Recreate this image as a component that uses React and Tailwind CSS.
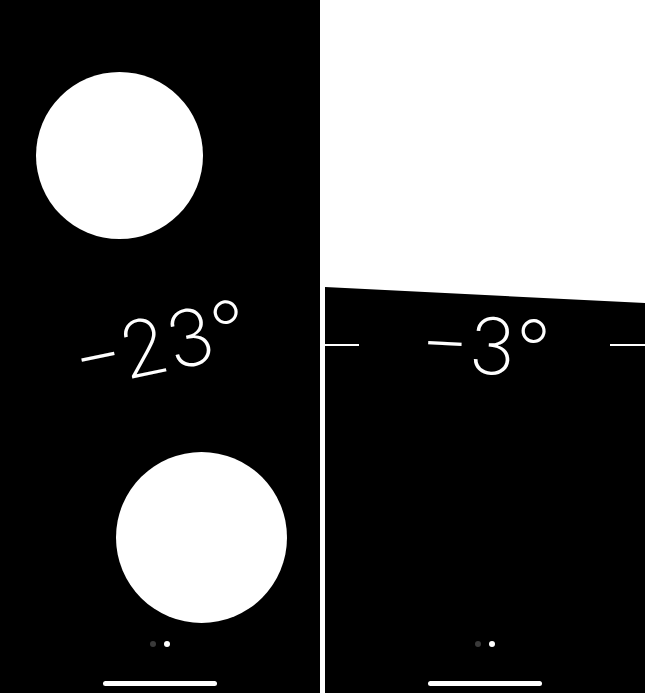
import React from 'react'

const PageDots = () => (
  <div className="flex items-center justify-center gap-[8px]">
    <span className="h-[6px] w-[6px] rounded-full bg-[#3a3a3a]" />
    <span className="h-[6px] w-[6px] rounded-full bg-white" />
  </div>
)

const BottomBar = () => (
  <div className="absolute bottom-0 left-0 right-0 flex flex-col items-center">
    <PageDots />
    <div className="mt-[34px] mb-[7px] h-[5px] w-[114px] rounded-full bg-white" />
  </div>
)

const Reading = ({ value, className }) => (
  <div className={`absolute left-0 right-0 flex h-[100px] items-center justify-center ${className}`}>
    <span className="font-['Inter','Liberation_Sans',sans-serif] text-[78px] font-[150] leading-none text-white">
      {value}
    </span>
  </div>
)

export default function App() {
  return (
    <div className="flex h-[693px] w-[645px] gap-[5px] overflow-hidden bg-white">
      {/* circles view */}
      <div className="relative h-full w-[320px] shrink-0 bg-black">
        <div className="absolute left-[36px] top-[72px] h-[167px] w-[167px] rounded-full bg-white" />
        <div className="absolute left-[116px] top-[452px] h-[171px] w-[171px] rounded-full bg-white" />
        <Reading value="−23°" className="top-[294px] -rotate-12" />
        <BottomBar />
      </div>

      {/* horizon view */}
      <div className="relative h-full flex-1 bg-white">
        <div className="absolute inset-0 bg-black [clip-path:polygon(0_287px,100%_303px,100%_100%,0_100%)]" />
        <div className="absolute left-0 top-[344px] h-[2px] w-[34px] bg-white" />
        <div className="absolute right-0 top-[344px] h-[2px] w-[35px] bg-white" />
        <Reading value="−3°" className="top-[296px] rotate-3" />
        <BottomBar />
      </div>
    </div>
  )
}
